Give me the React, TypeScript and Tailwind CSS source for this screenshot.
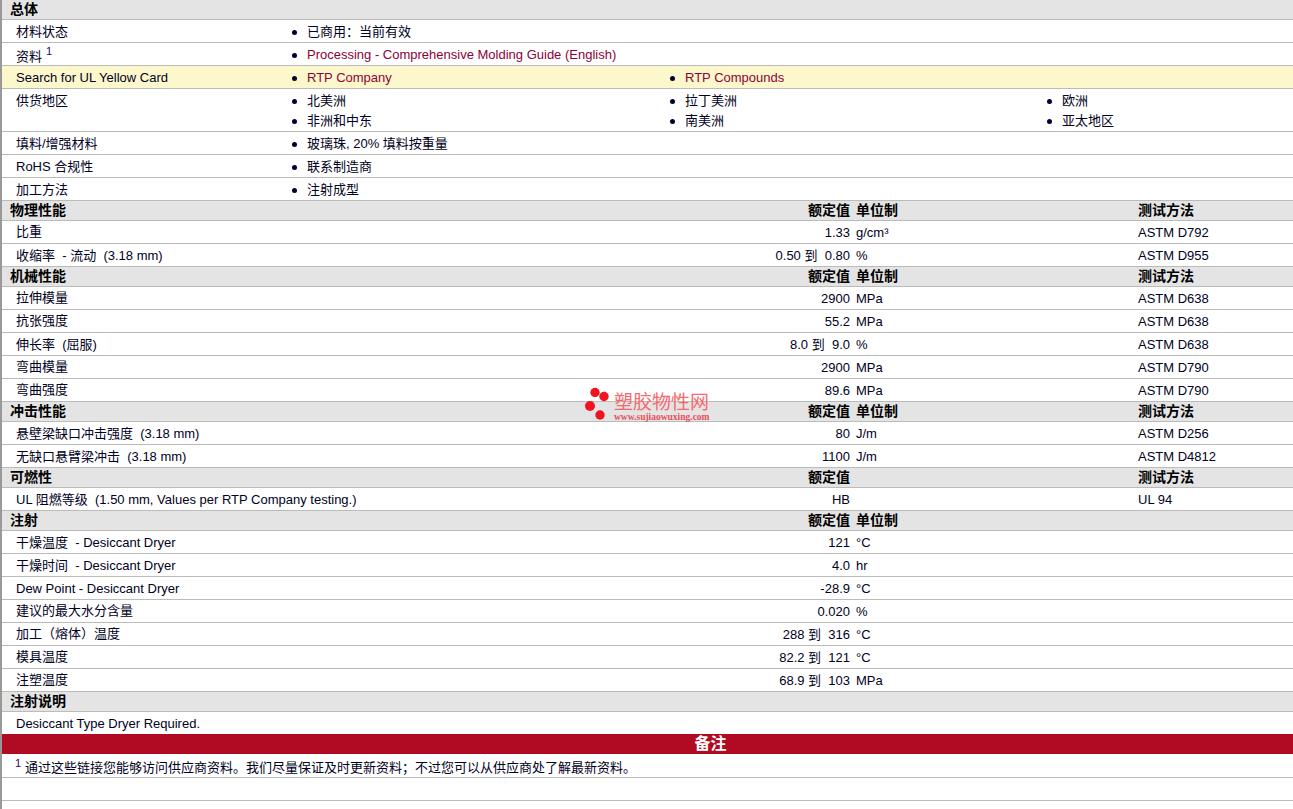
import React from 'react';

const font = "font-['Liberation_Sans','Noto_Sans_CJK_SC',sans-serif]";
const GRID = 'grid grid-cols-[848px_288px_1fr]';
const BULLET_GRID = 'grid grid-cols-[289px_378px_377px_1fr]';

function Section({ title, value = true, unit = true, test = true }: { title: string; value?: boolean; unit?: boolean; test?: boolean }) {
  return (
    <div className={`${GRID} h-5 items-center border-b border-[#bbbbbb] bg-[#e4e4e4] pb-[2px] text-[14px] font-bold text-black`}>
      <div className="flex justify-between pl-2">
        <span>{title}</span>
        {value && <span>额定值</span>}
      </div>
      <div className="pl-[6px]">{unit && '单位制'}</div>
      <div>{test && '测试方法'}</div>
    </div>
  );
}

function SimpleSection({ title }: { title: string }) {
  return <div className="flex h-5 items-center border-b border-[#bbbbbb] bg-[#e4e4e4] pb-[2px] pl-2 text-[14px] font-bold text-black">{title}</div>;
}

function Bullet({ children, link }: { children: React.ReactNode; link?: boolean }) {
  return (
    <div className="flex h-5 items-center">
      <span className="ml-px h-[5px] w-[5px] shrink-0 translate-y-px rounded-full bg-[#000033]" />
      <span className={`ml-[10px] whitespace-nowrap ${link ? 'text-[#8e0038]' : ''}`}>{children}</span>
    </div>
  );
}

function InfoRow({ label, items, link, yellow }: { label: React.ReactNode; items: string[]; link?: boolean; yellow?: boolean }) {
  return (
    <div className={`${BULLET_GRID} h-[23px] items-center border-b border-[#bbbbbb] ${yellow ? 'bg-[#fdf8cc]' : ''}`}>
      <div className="pl-[14px]">{label}</div>
      {items.map((t) => (
        <Bullet key={t} link={link}>{t}</Bullet>
      ))}
    </div>
  );
}

function Row({ label, value, unit, test }: { label: string; value: string; unit?: string; test?: string }) {
  const pureCjk = /^[^\x00-\x7F]+$/.test(label);
  return (
    <div className={`${GRID} h-[23px] items-center border-b border-[#bbbbbb]`}>
      <div className="flex justify-between whitespace-pre pl-[14px]">
        <span className={pureCjk ? '-translate-y-px' : ''}>{label}</span>
        <span>{value}</span>
      </div>
      <div className="pl-[6px]">{unit}</div>
      <div>{test}</div>
    </div>
  );
}

const regions = ['北美洲', '拉丁美洲', '欧洲', '非洲和中东', '南美洲', '亚太地区'];

export default function App() {
  return (
    <div className={`${font} relative h-[809px] overflow-hidden border-l-2 border-[#999999] bg-white text-[13px] leading-none text-[#000022]`}>
      <SimpleSection title="总体" />
      <InfoRow label="材料状态" items={['已商用：当前有效']} />
      <InfoRow
        label={
          <span className="relative inline-block translate-y-[2px]">
            资料 <sup className="absolute left-[30px] top-[-4px] text-[11px] leading-none text-[#330066]">1</sup>
          </span>
        }
        items={['Processing - Comprehensive Molding Guide (English)']}
        link
      />
      <InfoRow label="Search for UL Yellow Card" items={['RTP Company', 'RTP Compounds']} link yellow />
      <div className={`${BULLET_GRID} h-[43px] border-b border-[#bbbbbb] pt-px`}>
        <div className="col-span-1 row-span-2 pl-[14px] pt-[4px]">供货地区</div>
        {regions.map((r) => (
          <Bullet key={r}>{r}</Bullet>
        ))}
      </div>
      <InfoRow label="填料/增强材料" items={['玻璃珠, 20% 填料按重量']} />
      <InfoRow label="RoHS 合规性" items={['联系制造商']} />
      <InfoRow label="加工方法" items={['注射成型']} />

      <Section title="物理性能" />
      <Row label="比重" value="1.33" unit="g/cm³" test="ASTM D792" />
      <Row label="收缩率  - 流动  (3.18 mm)" value="0.50 到  0.80" unit="%" test="ASTM D955" />

      <Section title="机械性能" />
      <Row label="拉伸模量" value="2900" unit="MPa" test="ASTM D638" />
      <Row label="抗张强度" value="55.2" unit="MPa" test="ASTM D638" />
      <Row label="伸长率  (屈服)" value="8.0 到  9.0" unit="%" test="ASTM D638" />
      <Row label="弯曲模量" value="2900" unit="MPa" test="ASTM D790" />
      <Row label="弯曲强度" value="89.6" unit="MPa" test="ASTM D790" />

      <Section title="冲击性能" />
      <Row label="悬壁梁缺口冲击强度  (3.18 mm)" value="80" unit="J/m" test="ASTM D256" />
      <Row label="无缺口悬臂梁冲击  (3.18 mm)" value="1100" unit="J/m" test="ASTM D4812" />

      <Section title="可燃性" unit={false} />
      <Row label="UL 阻燃等级  (1.50 mm, Values per RTP Company testing.)" value="HB" test="UL 94" />

      <Section title="注射" test={false} />
      <Row label="干燥温度  - Desiccant Dryer" value="121" unit="°C" />
      <Row label="干燥时间  - Desiccant Dryer" value="4.0" unit="hr" />
      <Row label="Dew Point - Desiccant Dryer" value="-28.9" unit="°C" />
      <Row label="建议的最大水分含量" value="0.020" unit="%" />
      <Row label="加工（熔体）温度" value="288 到  316" unit="°C" />
      <Row label="模具温度" value="82.2 到  121" unit="°C" />
      <Row label="注塑温度" value="68.9 到  103" unit="MPa" />

      <SimpleSection title="注射说明" />
      <div className="flex h-[22px] items-center pl-[14px]">Desiccant Type Dryer Required.</div>
      <div className="flex h-5 items-center justify-center bg-[#b00b22] text-[16px] font-bold text-white">
        <span className="ml-[126px]">备注</span>
      </div>
      <div className="relative flex h-6 items-center border-b border-[#bbbbbb] pl-[23px] pt-[4px]">
        <sup className="absolute left-[13px] top-[4px] text-[11px] leading-none text-[#330066]">1</sup>
        通过这些链接您能够访问供应商资料。我们尽量保证及时更新资料；不过您可以从供应商处了解最新资料。
      </div>
      <div className="h-[23px] border-b border-[#bbbbbb]" />

      <div className="absolute left-[581px] top-[385px] flex items-start">
        <svg width="30" height="36" viewBox="0 0 30 36" className="shrink-0">
          <circle cx="12" cy="7.5" r="4.7" fill="#f01420" />
          <circle cx="21" cy="11.5" r="4.7" fill="#f01420" />
          <circle cx="7" cy="21" r="5" fill="#f01420" />
          <circle cx="17" cy="30" r="4.7" fill="#f01420" />
        </svg>
        <div className="ml-[1px] mt-[8px] flex flex-col">
          <span className="whitespace-nowrap text-[19px] font-normal leading-[20px] text-[#f56a6e]">塑胶物性网</span>
          <span className="mt-[-1px] whitespace-nowrap font-['Liberation_Serif',serif] text-[9.5px] font-bold leading-[10px] text-[#e8505c]">www.sujiaowuxing.com</span>
        </div>
      </div>
    </div>
  );
}
